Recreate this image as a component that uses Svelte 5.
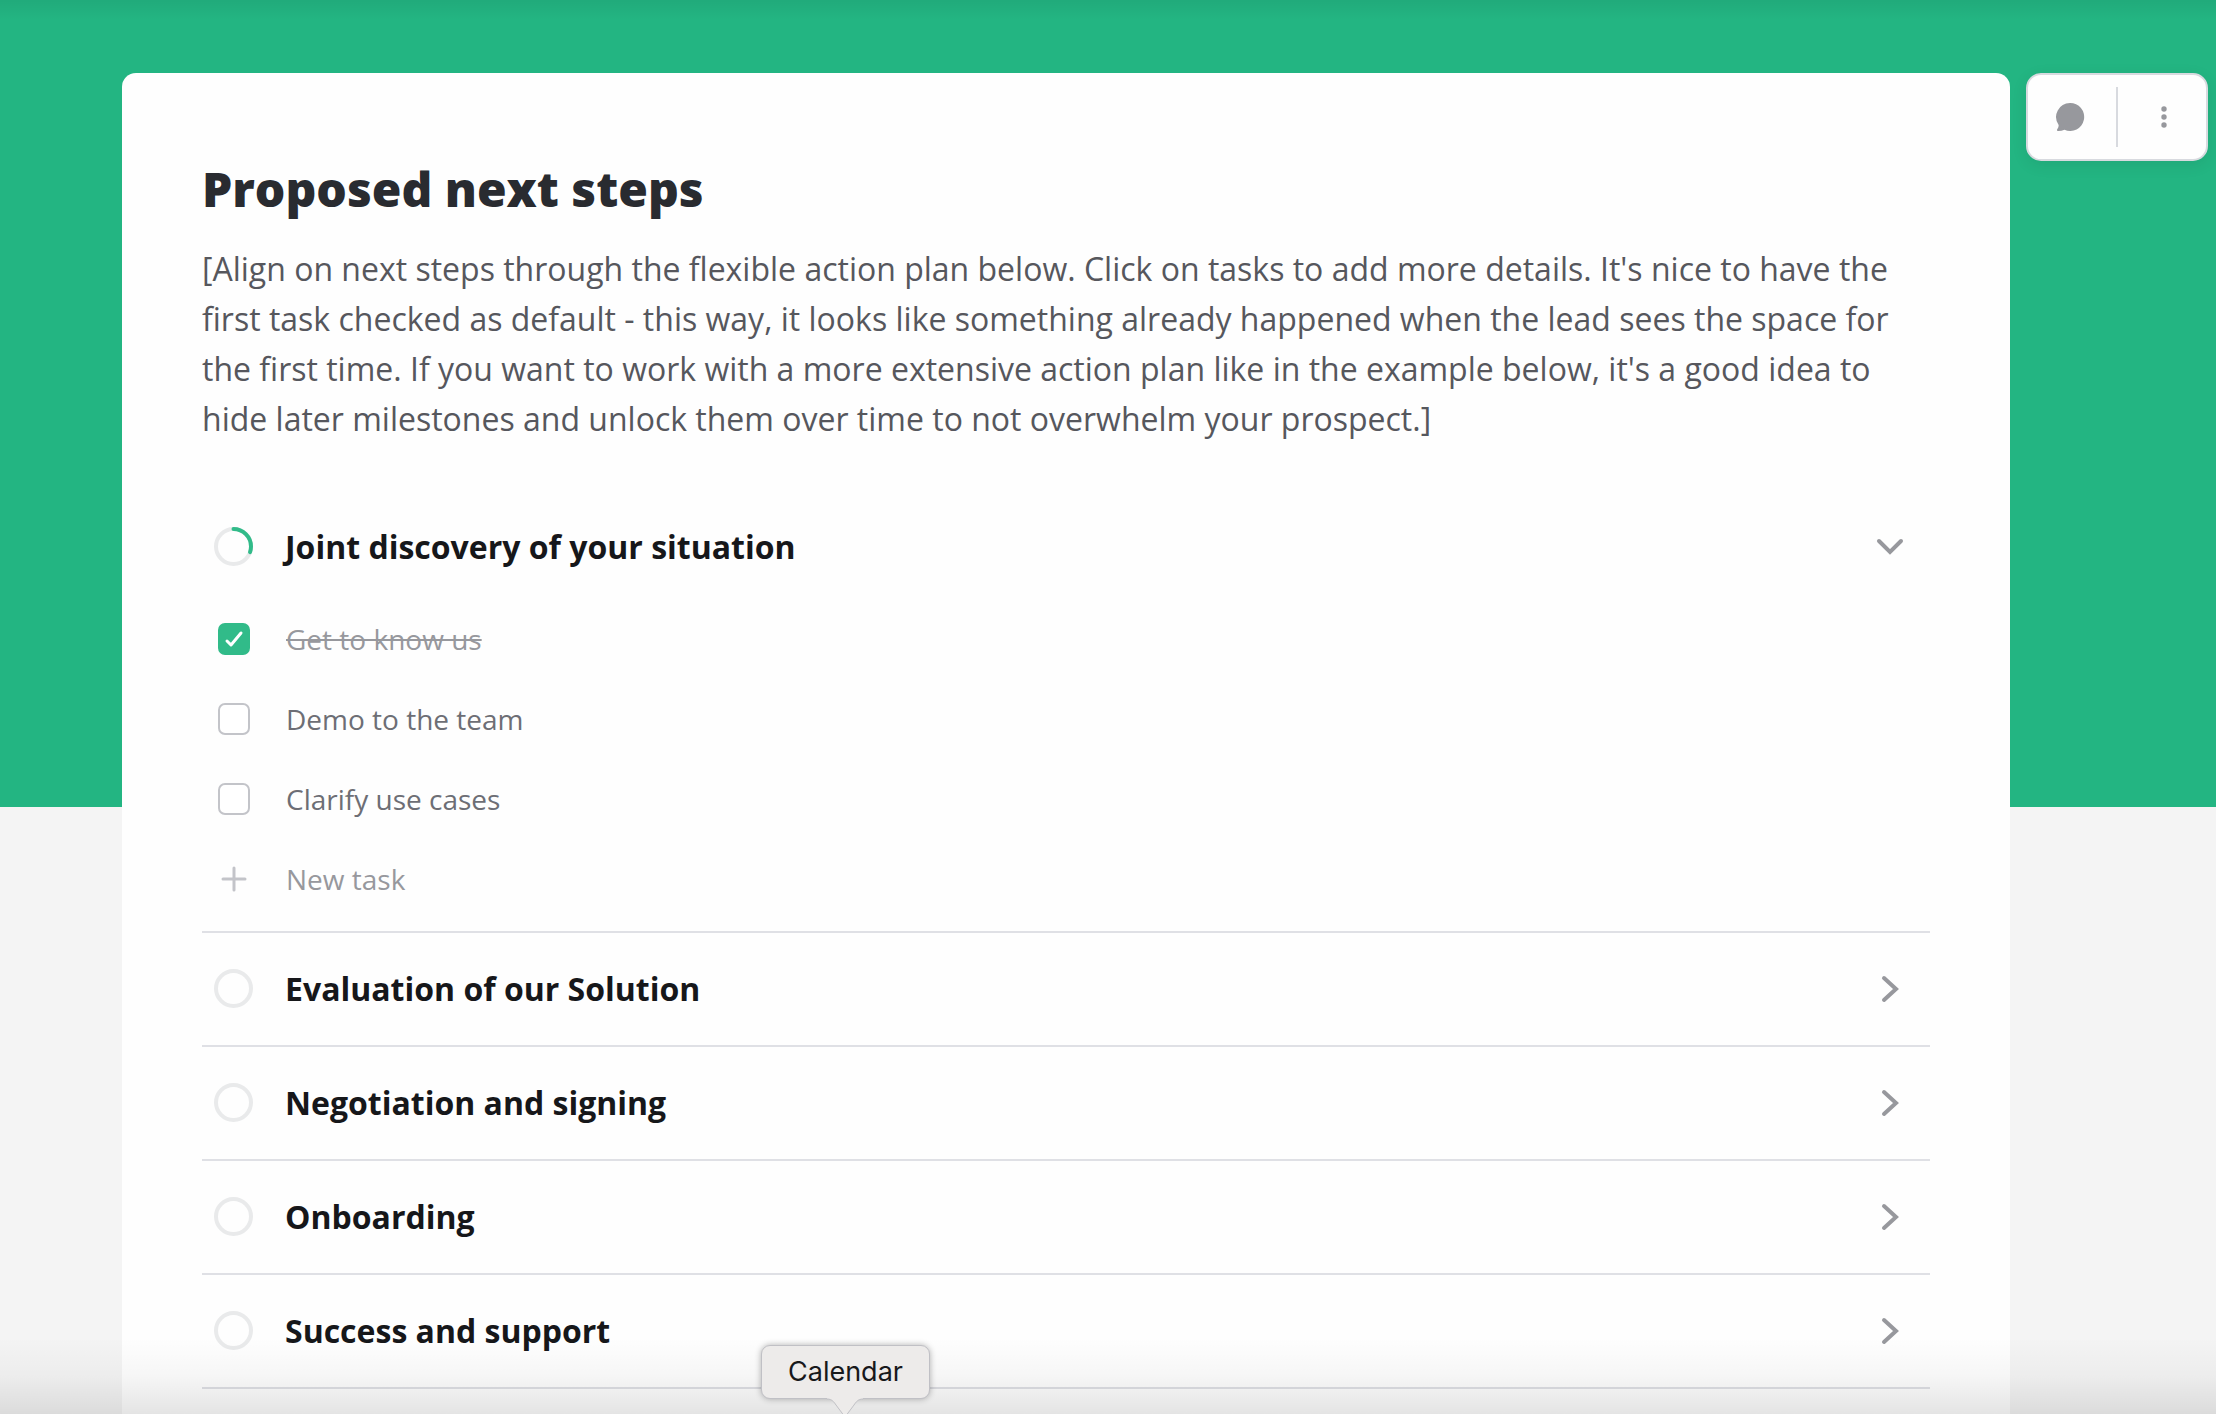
<script>
  let tasks = $state([
    { id: 'know', label: 'Get to know us', done: true },
    { id: 'demo', label: 'Demo to the team', done: false },
    { id: 'cases', label: 'Clarify use cases', done: false }
  ]);
  let open = $state(true);
  const doneShare = $derived((tasks.filter((t) => t.done).length / tasks.length) * 100);
  const milestones = [
    'Evaluation of our Solution',
    'Negotiation and signing',
    'Onboarding',
    'Success and support'
  ];
</script>

{#snippet ring(share)}
  <svg class="ring" viewBox="0 0 40 40" aria-hidden="true">
    <circle cx="19.500" cy="19.500" r="17.500" fill="none" stroke="#e9eaeb" stroke-width="4" />
    {#if share > 0}
      <circle
        cx="19.500" cy="19.500" r="17.500" fill="none" stroke="#31bb89" stroke-width="4" stroke-linecap="round"
        pathLength="100" stroke-dasharray="{share - 3} 200" transform="rotate(-90 19.500 19.500)"
      />
    {/if}
  </svg>
{/snippet}

{#snippet chevron(down)}
  <svg class="chevron" viewBox="0 0 40 40" aria-hidden="true">
    <path
      d={down ? 'M9 14 L20 25 L31 14' : 'M14 9 L26 20 L14 31'}
      fill="none" stroke="#97989d" stroke-width="4" stroke-linecap="round"
    />
  </svg>
{/snippet}

<div class="page">
  <main class="card">
    <h1>Proposed next steps</h1>
    <p>
      [Align on next steps through the flexible action plan below. Click on tasks to add more details.
      It's nice to have the first task checked as default - this way, it looks like something already
      happened when the lead sees the space for the first time. If you want to work with a more
      extensive action plan like in the example below, it's a good idea to hide later milestones and
      unlock them over time to not overwhelm your prospect.]
    </p>

    <section class="plan">
      <div class="milestone">
        <h2>
          <button class="head first" aria-expanded={open} onclick={() => (open = !open)}>
            {@render ring(doneShare)}
            <span class="title">Joint discovery of your situation</span>
            {@render chevron(open)}
          </button>
        </h2>
        {#if open}
          <ul>
            {#each tasks as task (task.id)}
              <li class="task" class:done={task.done}>
                <span class="box">
                  <input type="checkbox" id={task.id} bind:checked={task.done} />
                  <svg class="tick" viewBox="0 0 32 32" aria-hidden="true">
                    <path d="M9 18 L13 22 L23 10" fill="none" stroke="#fff" stroke-width="3" stroke-linecap="round" stroke-linejoin="round" />
                  </svg>
                </span>
                <label for={task.id}>{task.label}</label>
              </li>
            {/each}
            <li>
              <button class="task new">
                <svg class="plus" viewBox="0 0 40 40" aria-hidden="true">
                  <path d="M20 9 V31 M9 20 H31" stroke="#c3c4c9" stroke-width="3" stroke-linecap="round" />
                </svg>
                <span>New task</span>
              </button>
            </li>
          </ul>
        {/if}
      </div>

      {#each milestones as title}
        <div class="milestone">
          <h2>
            <button class="head" aria-expanded="false">
              {@render ring(0)}
              <span class="title">{title}</span>
              {@render chevron(false)}
            </button>
          </h2>
        </div>
      {/each}
    </section>
  </main>

  <aside class="tools">
    <button aria-label="Comments">
      <svg viewBox="0 0 32 32" aria-hidden="true">
        <path d="M16 2 A14 14 0 1 1 10.500 28.800 C8.500 29.600 6.500 30 4.200 30 C3 30 2.600 29 3.400 28 C4.500 26.600 4.900 25 4.500 23.800 A14 14 0 0 1 16 2 Z" fill="#97989d" />
      </svg>
    </button>
    <button aria-label="More options">
      <svg viewBox="0 0 32 32" aria-hidden="true" fill="#97989d">
        <circle cx="16" cy="8" r="2.700" /><circle cx="16" cy="16" r="2.700" /><circle cx="16" cy="24" r="2.700" />
      </svg>
    </button>
  </aside>

  <div class="shade top"></div>
  <div class="shade bottom"></div>
  <div class="tooltip" role="tooltip">
    Calendar
    <svg viewBox="0 0 36 18" aria-hidden="true">
      <path d="M0 1 C5 1 7 4 9 7 L18 19 L27 7 C29 4 31 1 36 1 V0 H0 Z" fill="#edebea" />
      <path d="M0 1 C5 1 7 4 9 7 L18 19 L27 7 C29 4 31 1 36 1" fill="none" stroke="#c0c0c5" />
    </svg>
  </div>
</div>

<style>
  :global(body) { background: #f4f4f4; }
  .page {
    position: relative;
    box-sizing: border-box;
    min-height: 100vh;
    overflow: hidden;
    display: flex;
    gap: 16px;
    padding: 73px 8px 0 122px;
    background: linear-gradient(#23b582 807px, #f4f4f4 807px);
    font-family: 'Open Sans', 'Noto Sans', sans-serif;
  }
  .card {
    flex: 1;
    min-width: 0;
    padding: 81px 80px 0;
    border-radius: 14px 14px 0 0;
    background: #fefefe;
  }
  h1 {
    margin: 0 0 20px;
    font-size: 48px;
    line-height: 70px;
    font-weight: 800;
    color: #292b30;
  }
  p {
    margin: 0 0 51px;
    font-size: 32px;
    line-height: 50px;
    color: #56575d;
  }
  h2, ul { margin: 0; padding: 0; font: inherit; list-style: none; }
  button { font: inherit; border: 0; background: none; padding: 0; cursor: pointer; }
  .milestone { border-bottom: 2px solid #dfe0e5; }
  .head {
    display: flex;
    align-items: center;
    gap: 31px;
    width: 100%;
    height: 112px;
    padding: 0 20px 0 12px;
    font-size: 32px;
    line-height: 44px;
    font-weight: 700;
    color: #16171a;
    text-align: left;
  }
  .head.first { height: 104px; }
  .title { flex: 1; }
  .ring, .chevron, .plus { flex: none; width: 40px; height: 40px; }
  ul { padding-bottom: 12px; }
  .task {
    display: flex;
    align-items: center;
    gap: 32px;
    height: 80px;
    padding: 0 12px;
    font-size: 28px;
    line-height: 40px;
    color: #6d6e75;
  }
  .task.new { width: 100%; color: #97989d; }
  .task.done label { color: #97989d; text-decoration: line-through; }
  .box { display: grid; place-items: center; width: 40px; height: 40px; }
  .box > * { grid-area: 1 / 1; }
  input {
    appearance: none;
    box-sizing: border-box;
    width: 32px;
    height: 32px;
    margin: 0;
    border: 2px solid #c3c4c9;
    border-radius: 7px;
    background: #fff;
  }
  input:checked { border-color: #31bb89; background: #31bb89; }
  .tick { width: 32px; height: 32px; pointer-events: none; visibility: hidden; }
  input:checked + .tick { visibility: visible; }
  .tools {
    flex: none;
    align-self: flex-start;
    box-sizing: border-box;
    display: flex;
    align-items: center;
    width: 182px;
    height: 88px;
    border: 2px solid #d8dadf;
    border-radius: 15px;
    background: #fefefe;
    box-shadow: 0 4px 16px rgba(0, 0, 0, 0.08);
  }
  .tools button { flex: 1; display: grid; place-items: center; height: 60px; padding-right: 4px; }
  .tools button + button { border-left: 2px solid #d8dadf; padding: 0 0 0 4px; }
  .tools svg { width: 32px; height: 32px; }
  .shade { position: absolute; left: 0; right: 0; pointer-events: none; }
  .shade.top { top: 0; height: 20px; background: linear-gradient(rgba(0, 0, 0, 0.06), transparent); }
  .shade.bottom {
    bottom: 0;
    height: 76px;
    background: linear-gradient(transparent, rgba(0, 0, 0, 0.03) 50%, rgba(0, 0, 0, 0.1));
  }
  .tooltip {
    position: absolute;
    left: 761px;
    bottom: 15px;
    padding: 8px 26px;
    border: 1px solid #c0c0c5;
    border-radius: 9px;
    background: #edebea;
    box-shadow: 0 0 6px rgba(0, 0, 0, 0.3);
    font-family: Inter, sans-serif;
    font-size: 27px;
    line-height: 36px;
    color: #17181b;
  }
  .tooltip svg { position: absolute; top: 100%; left: 50%; width: 36px; height: 18px; margin-left: -18px; }
</style>
